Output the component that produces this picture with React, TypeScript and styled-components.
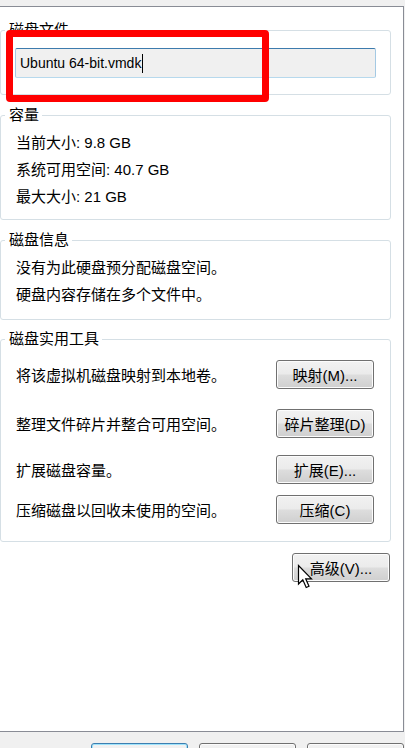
import React from "react";
import styled, { createGlobalStyle } from "styled-components";

const Global = createGlobalStyle`
  html, body { margin: 0; padding: 0; background: #f0f0f0; }
  body {
    font-family: "Liberation Sans", "Noto Sans CJK SC", sans-serif;
    font-size: 15px;
    color: #000;
    overflow: hidden;
  }
  * { box-sizing: border-box; }
`;

const Page = styled.div`
  position: relative;
  width: 405px;
  height: 748px;
  padding-top: 6px;
  overflow: hidden;
`;

const Panel = styled.div`
  width: 404px;
  height: 726px;
  background: #fff;
  border: 1px solid #898c95;
  border-left: none;
  padding: 23px 12px 0 0;
  display: flex;
  flex-direction: column;
`;

const Group = styled.div<{ $mt?: number; $pt: number; $pb: number }>`
  position: relative;
  margin-top: ${(p) => p.$mt ?? 0}px;
  padding-top: ${(p) => p.$pt}px;
  padding-bottom: ${(p) => p.$pb}px;
  border: 1px solid #d5dfe5;
  border-radius: 3px;
  display: flex;
  flex-direction: column;
`;

const Legend = styled.span`
  position: absolute;
  top: -10px;
  left: 4px;
  padding: 0 3px 0 4px;
  background: #fff;
  line-height: 18px;
  white-space: nowrap;
`;

const TextBox = styled.div`
  margin: 0 14px;
  height: 30px;
  display: flex;
  align-items: center;
  padding-left: 4px;
  font-size: 14px;
  background: #f0f0f0;
  border: 1px solid #a4c9e3;
  border-top-color: #3d7bad;
  border-bottom-color: #b7d9ed;
  border-radius: 2px;
`;

const Caret = styled.span`
  display: inline-block;
  width: 1px;
  height: 19px;
  margin-left: 1px;
  background: #000;
`;

const InfoLine = styled.div`
  padding-left: 15px;
  line-height: 27px;
  white-space: nowrap;
`;

const ToolRow = styled.div<{ $mt: number }>`
  margin-top: ${(p) => p.$mt}px;
  height: 29px;
  display: flex;
  align-items: center;
  justify-content: space-between;
  padding: 0 16px 0 15px;
  white-space: nowrap;
`;

const WinButton = styled.button<{ $focus?: boolean }>`
  width: ${(p) => (p.$focus !== undefined ? 97 : 98)}px;
  height: 29px;
  padding: 0;
  font: inherit;
  color: #000;
  border: 1px solid ${(p) => (p.$focus ? "#3c7fb1" : "#707070")};
  border-radius: 3px;
  background: linear-gradient(#f2f2f2 0%, #ebebeb 48%, #dddddd 52%, #cfcfcf 100%);
  box-shadow: inset 0 0 0 1px ${(p) => (p.$focus ? "#9fe3fb" : "#fcfcfc")};
  white-space: nowrap;
  flex-shrink: 0;
`;

const AdvancedButton = styled(WinButton)`
  align-self: flex-end;
  margin-top: 11px;
  margin-right: 1px;
`;

const Footer = styled.div`
  margin-top: 11px;
  display: flex;
  justify-content: flex-end;
  gap: 11px;
  padding-right: 1px;
`;

const Highlight = styled.div`
  position: absolute;
  left: 6px;
  top: 30px;
  width: 263px;
  height: 72px;
  border: 7px solid #ff0000;
  border-radius: 4px;
  pointer-events: none;
`;

const Pointer = styled.svg`
  position: absolute;
  left: 297px;
  top: 564px;
`;

const tools = [
  { text: "将该虚拟机磁盘映射到本地卷。", btn: "映射(M)...", mt: 20 },
  { text: "整理文件碎片并整合可用空间。", btn: "碎片整理(D)", mt: 20 },
  { text: "扩展磁盘容量。", btn: "扩展(E)...", mt: 17 },
  { text: "压缩磁盘以回收未使用的空间。", btn: "压缩(C)", mt: 11 },
];

export default function App() {
  return (
    <Page>
      <Global />
      <Panel>
        <Group $pt={17} $pb={16}>
          <Legend>磁盘文件</Legend>
          <TextBox>
            Ubuntu 64-bit.vmdk
            <Caret />
          </TextBox>
        </Group>

        <Group $mt={20} $pt={13} $pb={9}>
          <Legend>容量</Legend>
          <InfoLine>当前大小: 9.8 GB</InfoLine>
          <InfoLine>系统可用空间: 40.7 GB</InfoLine>
          <InfoLine>最大大小: 21 GB</InfoLine>
        </Group>

        <Group $mt={20} $pt={13} $pb={11}>
          <Legend>磁盘信息</Legend>
          <InfoLine>没有为此硬盘预分配磁盘空间。</InfoLine>
          <InfoLine>硬盘内容存储在多个文件中。</InfoLine>
        </Group>

        <Group $mt={19} $pt={0} $pb={17}>
          <Legend>磁盘实用工具</Legend>
          {tools.map((t) => (
            <ToolRow key={t.btn} $mt={t.mt}>
              <span>{t.text}</span>
              <WinButton>{t.btn}</WinButton>
            </ToolRow>
          ))}
        </Group>

        <AdvancedButton>高级(V)...</AdvancedButton>
      </Panel>

      <Footer>
        <WinButton $focus aria-label="确定" />
        <WinButton $focus={false} aria-label="取消" />
        <WinButton $focus={false} aria-label="帮助" />
      </Footer>

      <Highlight />
      <Pointer width="17" height="26" viewBox="0 0 17 26">
        <path
          d="M1.5 1.5 L1.5 20 L5.8 15.8 L9.2 23.5 L12 22.3 L8.7 14.8 L14.5 14.8 Z"
          fill="#fff"
          stroke="#000"
          strokeWidth="1.2"
          strokeLinejoin="miter"
        />
      </Pointer>
    </Page>
  );
}
